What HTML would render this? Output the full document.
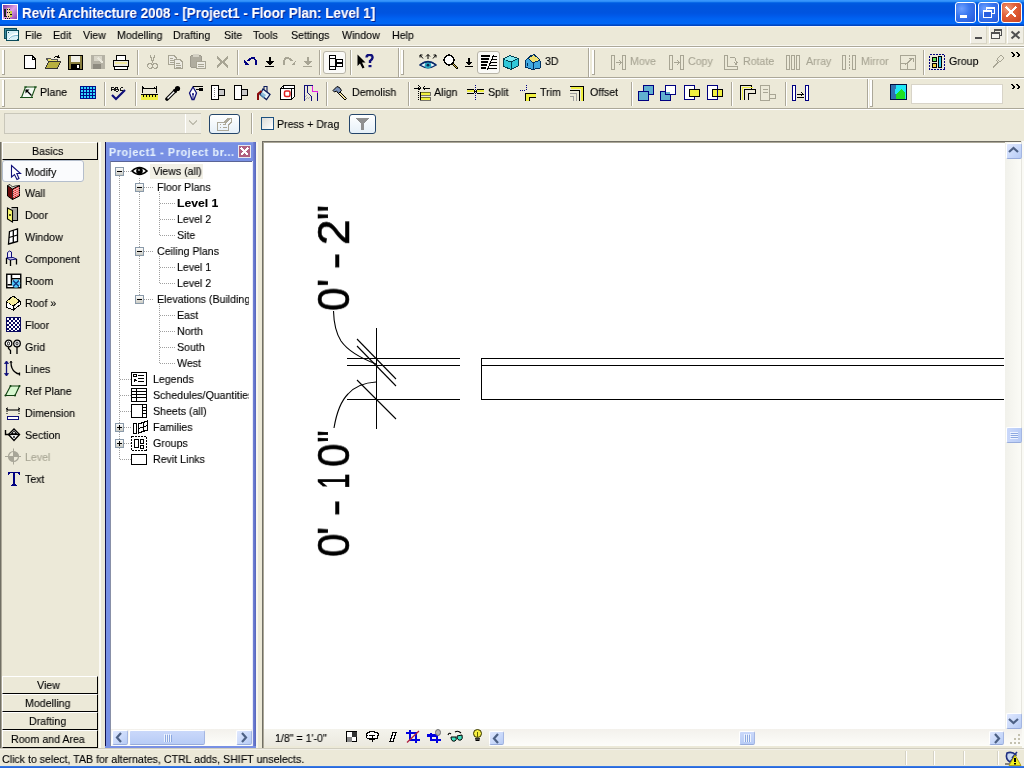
<!DOCTYPE html><html><head><meta charset="utf-8"><style>
html,body{margin:0;padding:0;}
body{width:1024px;height:768px;overflow:hidden;position:relative;background:#ECE9D8;font-family:"Liberation Sans",sans-serif;font-size:11px;}
.t{position:absolute;white-space:nowrap;line-height:1;will-change:transform;transform-origin:0 0;transform:scaleX(0.965);-webkit-text-stroke:0.12px currentColor;}
svg{display:block;}
</style></head><body>
<div style="position:absolute;left:0px;top:0px;width:1024px;height:26px;background:linear-gradient(to bottom,#3D9BFF 0px,#2C8CF6 1.5px,#0A6AE8 2.5px,#005AE0 3.5px,#0055DD 6px,#0054E0 13px,#005AEA 16px,#0063F2 19px,#0067F5 24px,#0050D0 24.6px,#0040B8 26px)"></div>
<div style="position:absolute;left:0px;top:26px;width:1024px;height:1px;background:#F4F4F8"></div>
<svg style="position:absolute;left:2px;top:4px;" width="17" height="16" viewBox="0 0 17 16" shape-rendering="crispEdges"><defs><linearGradient id="ap" x1="0" y1="0" x2="1" y2="1"><stop offset="0" stop-color="#7A3A9A"/><stop offset="0.5" stop-color="#E0A0E8"/><stop offset="1" stop-color="#8A40B0"/></linearGradient></defs><rect x="0" y="0" width="16" height="16" fill="#fff"/><rect x="1" y="1" width="14" height="14" fill="url(#ap)"/><rect x="2" y="5" width="2" height="8" fill="#202020"/><rect x="5" y="4" width="3" height="10" fill="#F0D0A0"/><g fill="#101010"><rect x="5" y="5" width="1" height="1"/><rect x="7" y="5" width="1" height="1"/><rect x="5" y="8" width="1" height="1"/><rect x="7" y="8" width="1" height="1"/><rect x="4" y="12" width="1" height="1"/><rect x="6" y="12" width="1" height="1"/><rect x="8" y="12" width="1" height="1"/><rect x="3" y="14" width="1" height="1"/><rect x="5" y="14" width="1" height="1"/><rect x="7" y="14" width="1" height="1"/></g><rect x="8" y="7" width="2" height="6" fill="#C8D040"/><rect x="8" y="10" width="2" height="1" fill="#101010"/></svg>
<div class="t" style="left:21.5px;top:6.33px;font-size:14.5px;font-weight:bold;color:#fff;text-shadow:1px 1px 0 #0A1E8A;transform-origin:0 0;transform:scaleX(0.924);">Revit Architecture 2008 - [Project1 - Floor Plan: Level 1]</div>
<div style="position:absolute;left:955px;top:2px;width:21px;height:21px;box-sizing:border-box;border:1px solid #fff;border-radius:3px;background:radial-gradient(circle at 30% 30%,#6FA0FF 0%,#3A78F0 40%,#2456D8 100%)"></div>
<div style="position:absolute;left:978px;top:2px;width:21px;height:21px;box-sizing:border-box;border:1px solid #fff;border-radius:3px;background:radial-gradient(circle at 30% 30%,#6FA0FF 0%,#3A78F0 40%,#2456D8 100%)"></div>
<div style="position:absolute;left:1001px;top:2px;width:21px;height:21px;box-sizing:border-box;border:1px solid #fff;border-radius:3px;background:radial-gradient(circle at 30% 30%,#F0A080 0%,#E26038 40%,#C84020 100%)"></div>
<div style="position:absolute;left:960px;top:15px;width:7px;height:3px;background:#fff"></div>
<svg style="position:absolute;left:978px;top:2px;" width="21" height="21" viewBox="0 0 21 21" shape-rendering="crispEdges"><rect x="8" y="5" width="8" height="6" fill="none" stroke="#fff" stroke-width="1"/><rect x="8" y="5" width="8" height="2" fill="#fff"/><rect x="5" y="8.5" width="8" height="7" fill="#2a60e0" stroke="#fff" stroke-width="1"/><rect x="5" y="8" width="8" height="2" fill="#fff"/></svg>
<svg style="position:absolute;left:1001px;top:2px;" width="21" height="21" viewBox="0 0 21 21" shape-rendering="crispEdges"><path d="M5 5 L15 15 M15 5 L5 15" stroke="#fff" stroke-width="2.2"/></svg>
<svg style="position:absolute;left:4px;top:28px;" width="17" height="14" viewBox="0 0 17 14" shape-rendering="crispEdges"><rect x="0.5" y="0.5" width="12" height="10" fill="#3A8AA0" stroke="#0A4A5A"/><rect x="2.5" y="2.5" width="12" height="10" fill="#D8F0F8" stroke="#0A4A5A"/><path d="M5 11 Q8 6 14 6" stroke="#fff" stroke-width="2" fill="none" shape-rendering="geometricPrecision"/><path d="M5 11 Q8 7 14 7.5" stroke="#60A8C8" stroke-width="0.8" fill="none" shape-rendering="geometricPrecision"/><rect x="4" y="3.5" width="1" height="1" fill="#0A4A5A"/><path d="M12.5 12.5 L15 10" stroke="#0A4A5A"/></svg>
<div class="t" style="left:25px;top:29.69px;font-size:11px;font-weight:normal;color:#000;">File</div>
<div class="t" style="left:53px;top:29.69px;font-size:11px;font-weight:normal;color:#000;">Edit</div>
<div class="t" style="left:83px;top:29.69px;font-size:11px;font-weight:normal;color:#000;">View</div>
<div class="t" style="left:117px;top:29.69px;font-size:11px;font-weight:normal;color:#000;">Modelling</div>
<div class="t" style="left:173px;top:29.69px;font-size:11px;font-weight:normal;color:#000;">Drafting</div>
<div class="t" style="left:224px;top:29.69px;font-size:11px;font-weight:normal;color:#000;">Site</div>
<div class="t" style="left:253px;top:29.69px;font-size:11px;font-weight:normal;color:#000;">Tools</div>
<div class="t" style="left:291px;top:29.69px;font-size:11px;font-weight:normal;color:#000;">Settings</div>
<div class="t" style="left:342px;top:29.69px;font-size:11px;font-weight:normal;color:#000;">Window</div>
<div class="t" style="left:392px;top:29.69px;font-size:11px;font-weight:normal;color:#000;">Help</div>
<div style="position:absolute;left:970px;top:26px;width:17px;height:18px;box-sizing:border-box;border-top:1px solid #fff;border-left:1px solid #fff;border-right:1px solid #D8D5C6;border-bottom:1px solid #D8D5C6;background:#EFEDE3"></div>
<div style="position:absolute;left:989px;top:26px;width:17px;height:18px;box-sizing:border-box;border-top:1px solid #fff;border-left:1px solid #fff;border-right:1px solid #D8D5C6;border-bottom:1px solid #D8D5C6;background:#EFEDE3"></div>
<div style="position:absolute;left:1007px;top:26px;width:17px;height:18px;box-sizing:border-box;border-top:1px solid #fff;border-left:1px solid #fff;border-right:1px solid #D8D5C6;border-bottom:1px solid #D8D5C6;background:#EFEDE3"></div>
<div style="position:absolute;left:975px;top:37px;width:7px;height:2px;background:#505050"></div>
<svg style="position:absolute;left:991px;top:29px;" width="12" height="11" viewBox="0 0 12 11" shape-rendering="crispEdges"><path d="M3.5 3 V0.5 H10.5 V6.5 H8" fill="none" stroke="#505050"/><rect x="3" y="0" width="8" height="2" fill="#505050"/><rect x="0.5" y="3.5" width="8" height="6" fill="#F4F3EE" stroke="#505050"/><rect x="0" y="3" width="9" height="2" fill="#505050"/></svg>
<svg style="position:absolute;left:1010px;top:30px;" width="11" height="10" viewBox="0 0 11 10" shape-rendering="crispEdges"><path d="M1.5 1.5 L9.5 8.5 M9.5 1.5 L1.5 8.5" stroke="#505050" stroke-width="2" shape-rendering="geometricPrecision"/></svg>
<div style="position:absolute;left:0px;top:45px;width:1024px;height:1px;background:#F6F5EE"></div>
<div style="position:absolute;left:0px;top:46px;width:1024px;height:1px;background:#ACA899"></div>
<div style="position:absolute;left:0px;top:47px;width:1024px;height:1px;background:#fff"></div>
<div style="position:absolute;left:0px;top:77px;width:1024px;height:1px;background:#ACA899"></div>
<div style="position:absolute;left:0px;top:78px;width:1024px;height:1px;background:#fff"></div>
<div style="position:absolute;left:0px;top:108px;width:1024px;height:1px;background:#ACA899"></div>
<div style="position:absolute;left:0px;top:109px;width:1024px;height:1px;background:#fff"></div>
<div style="position:absolute;left:2px;top:50px;width:2px;height:25px;background:#fff"></div>
<div style="position:absolute;left:4px;top:50px;width:1px;height:25px;background:#ACA899"></div>
<div style="position:absolute;left:2px;top:74px;width:3px;height:1px;background:#ACA899"></div>
<div style="position:absolute;left:2px;top:80px;width:2px;height:27px;background:#fff"></div>
<div style="position:absolute;left:4px;top:80px;width:1px;height:27px;background:#ACA899"></div>
<div style="position:absolute;left:2px;top:106px;width:3px;height:1px;background:#ACA899"></div>
<svg style="position:absolute;left:24px;top:55px;" width="12" height="14" viewBox="0 0 12 14" shape-rendering="crispEdges"><path d="M0.5 0.5 H8 L11.5 4 V13.5 H0.5 Z" fill="#fff" stroke="#000"/><path d="M8 0.5 V4 H11.5" fill="none" stroke="#000"/></svg>
<svg style="position:absolute;left:45px;top:55px;" width="16" height="14" viewBox="0 0 16 14" shape-rendering="crispEdges"><path d="M1 3 H5 L6 4 H12 V6 H3 Z" fill="#e8e070" stroke="#555" stroke-width="1"/><path d="M0.5 13.5 L3.5 6.5 H15.5 L12.5 13.5 Z" fill="#b8b040" stroke="#333"/><path d="M9 3 Q11 0 14 2" stroke="#000" fill="none"/><path d="M13 0 L14.5 2.5 L12 3" stroke="#000" fill="none"/></svg>
<svg style="position:absolute;left:68px;top:55px;" width="15" height="15" viewBox="0 0 15 15" shape-rendering="crispEdges"><rect x="0.5" y="0.5" width="14" height="14" fill="#8a8040" stroke="#000"/><rect x="3" y="1" width="9" height="6" fill="#f0f0e8"/><rect x="3" y="9" width="9" height="5" fill="#000"/><rect x="9" y="10" width="2" height="3" fill="#fff"/></svg>
<svg style="position:absolute;left:90px;top:54px;" width="16" height="16" viewBox="0 0 16 16" shape-rendering="crispEdges"><rect x="1" y="1" width="14" height="14" fill="#B5B2A5"/><rect x="4" y="2" width="8" height="5" fill="#D8D5C8"/><rect x="3" y="10" width="8" height="5" fill="#8E8B80"/><path d="M8 4 L13 9" stroke="#E8E6DA" stroke-width="2"/></svg>
<svg style="position:absolute;left:113px;top:55px;" width="16" height="15" viewBox="0 0 16 15" shape-rendering="crispEdges"><rect x="3.5" y="0.5" width="9" height="5" fill="#fff" stroke="#000"/><rect x="0.5" y="5.5" width="15" height="6" fill="#e8e8e0" stroke="#000"/><rect x="2" y="7" width="12" height="2" fill="#f0e8a0"/><rect x="1.5" y="11.5" width="13" height="3" fill="#fff" stroke="#000"/></svg>
<div style="position:absolute;left:137px;top:50px;width:1px;height:25px;background:#ACA899"></div>
<div style="position:absolute;left:138px;top:50px;width:1px;height:25px;background:#fff"></div>
<svg style="position:absolute;left:147px;top:55px;" width="11" height="14" viewBox="0 0 11 14" shape-rendering="crispEdges"><path d="M3 0 L6 8 M8 0 L5 8" stroke="#A8A594" stroke-width="1.2" fill="none"/><circle cx="3" cy="11" r="2.3" fill="none" stroke="#A8A594" stroke-width="1.2"/><circle cx="8" cy="11" r="2.3" fill="none" stroke="#A8A594" stroke-width="1.2"/></svg>
<svg style="position:absolute;left:168px;top:55px;" width="16" height="14" viewBox="0 0 16 14" shape-rendering="crispEdges"><path d="M0.5 0.5 H6 L8 2.5 V9.5 H0.5Z" fill="#EDEBE2" stroke="#A8A594"/><path d="M6.5 4.5 H12 L14.5 7 V13.5 H6.5Z" fill="#EDEBE2" stroke="#A8A594"/><path d="M8 8 H12 M8 10 H13 M8 12 H13 M2 3 H5 M2 5 H6 M2 7 H6" stroke="#A8A594"/></svg>
<svg style="position:absolute;left:190px;top:54px;" width="16" height="15" viewBox="0 0 16 15" shape-rendering="crispEdges"><rect x="0.5" y="1.5" width="11" height="12" rx="2" fill="#B0AD9F" stroke="#9E9B8E"/><rect x="3" y="0" width="6" height="3" fill="#D5D2C5"/><rect x="6.5" y="7.5" width="9" height="7" fill="#EDEBE2" stroke="#A8A594"/><path d="M8 10 H14 M8 12 H14" stroke="#A8A594"/></svg>
<svg style="position:absolute;left:216px;top:56px;" width="13" height="12" viewBox="0 0 13 12" shape-rendering="crispEdges"><path d="M1 1 L12 11 M12 1 L1 11" stroke="#A8A594" stroke-width="2"/></svg>
<div style="position:absolute;left:237px;top:50px;width:1px;height:25px;background:#ACA899"></div>
<div style="position:absolute;left:238px;top:50px;width:1px;height:25px;background:#fff"></div>
<svg style="position:absolute;left:244px;top:57px;" width="14" height="9" viewBox="0 0 14 9" shape-rendering="crispEdges"><path d="M4 4 Q7 0 10 1 Q13 3 12 8" stroke="#000080" stroke-width="1.6" fill="none"/><path d="M0 3 L5 8 L1 8 Z" fill="#000080"/></svg>
<svg style="position:absolute;left:265px;top:57px;" width="9" height="10" viewBox="0 0 9 10" shape-rendering="crispEdges"><path d="M4.5 0 V6" stroke="#000" stroke-width="2"/><path d="M0 4 H9 L4.5 8.5 Z" fill="#000"/><rect x="0" y="9" width="9" height="1" fill="#000"/></svg>
<svg style="position:absolute;left:282px;top:57px;" width="14" height="9" viewBox="0 0 14 9" shape-rendering="crispEdges"><path d="M10 4 Q7 0 4 1 Q1 3 2 8" stroke="#A8A594" stroke-width="1.6" fill="none"/><path d="M14 3 L9 8 L13 8 Z" fill="#A8A594"/></svg>
<svg style="position:absolute;left:303px;top:57px;" width="9" height="10" viewBox="0 0 9 10" shape-rendering="crispEdges"><path d="M4.5 0 V6" stroke="#A8A594" stroke-width="2"/><path d="M0 4 H9 L4.5 8.5 Z" fill="#A8A594"/><rect x="0" y="9" width="9" height="1" fill="#A8A594"/></svg>
<div style="position:absolute;left:319px;top:50px;width:1px;height:25px;background:#ACA899"></div>
<div style="position:absolute;left:320px;top:50px;width:1px;height:25px;background:#fff"></div>
<div style="position:absolute;left:323px;top:51px;width:23px;height:23px;box-sizing:border-box;border:1px solid #B8B5A8;border-radius:3px;background:#FAFAF7"></div>
<svg style="position:absolute;left:328px;top:55px;" width="16" height="15" viewBox="0 0 16 15" shape-rendering="crispEdges"><path d="M1.5 1 V14 M5 3.5 H7.5 V10 H8" stroke="#000" fill="none"/><rect x="1.5" y="0.5" width="6" height="3" rx="1" fill="#fff" stroke="#000"/><rect x="8.5" y="4.5" width="6" height="3" rx="1" fill="#fff" stroke="#000"/><rect x="8.5" y="8.5" width="6" height="3" rx="1" fill="#fff" stroke="#000"/><rect x="1.5" y="11.5" width="6" height="3" rx="1" fill="#fff" stroke="#000"/><path d="M7.5 6 H8.5" stroke="#000"/></svg>
<div style="position:absolute;left:350px;top:50px;width:1px;height:25px;background:#ACA899"></div>
<div style="position:absolute;left:351px;top:50px;width:1px;height:25px;background:#fff"></div>
<svg style="position:absolute;left:357px;top:54px;" width="17" height="15" viewBox="0 0 17 15" shape-rendering="crispEdges"><g shape-rendering="geometricPrecision"><path d="M0.5 0.5 V12 L3 9.5 L5.5 14.5 L7.5 13.5 L5 8.5 H8.5 Z" fill="#000"/><path d="M9.5 3.5 Q9.5 0.8 12.5 0.8 Q15.8 0.8 15.5 3.8 Q15.2 5.8 13 7 V9" stroke="#10107A" stroke-width="2.4" fill="none"/><rect x="11.5" y="11" width="3" height="2.2" fill="#10107A"/></g></svg>
<div style="position:absolute;left:398px;top:48px;width:1px;height:29px;background:#ACA899"></div>
<div style="position:absolute;left:399px;top:48px;width:1px;height:29px;background:#fff"></div>
<div style="position:absolute;left:401px;top:50px;width:2px;height:25px;background:#fff"></div>
<div style="position:absolute;left:403px;top:50px;width:1px;height:25px;background:#ACA899"></div>
<div style="position:absolute;left:401px;top:74px;width:3px;height:1px;background:#ACA899"></div>
<svg style="position:absolute;left:419px;top:54px;" width="18" height="16" viewBox="0 0 18 16" shape-rendering="crispEdges"><g shape-rendering="geometricPrecision"><path d="M9 0.5 V5 M7 2.5 L9 0.5 L11 2.5 M1 1 L4 4.5 M1 1 V3.5 M1 1 H3.5 M17 1 L14 4.5 M17 1 V3.5 M17 1 H14.5" stroke="#000" stroke-width="1" fill="none"/><path d="M0.8 11 Q9 4 17.2 11 Q9 16.5 0.8 11 Z" fill="#E8F8FC" stroke="#0A2A6A" stroke-width="1.3"/><circle cx="9" cy="11.2" r="3.2" fill="#2AA8C0"/><circle cx="9" cy="11.2" r="1.4" fill="#0A2A5A"/><path d="M1.5 10.5 Q9 5 16.5 10.5" stroke="#0A2A6A" stroke-width="1.5" fill="none"/></g></svg>
<svg style="position:absolute;left:443px;top:54px;" width="16" height="16" viewBox="0 0 16 16" shape-rendering="crispEdges"><circle cx="6" cy="6" r="5" fill="#fff" stroke="#000" stroke-width="1.3"/><path d="M9.5 9.5 L15 15" stroke="#000" stroke-width="2.5"/><path d="M10.5 10.5 L14.5 14.5" stroke="#d8c040" stroke-width="1.3"/></svg>
<svg style="position:absolute;left:465px;top:58px;" width="8" height="9" viewBox="0 0 8 9" shape-rendering="crispEdges"><path d="M4 0 V5" stroke="#000" stroke-width="2"/><path d="M0 3.5 H8 L4 7.5 Z" fill="#000"/><rect x="0" y="8" width="8" height="1" fill="#000"/></svg>
<div style="position:absolute;left:477px;top:51px;width:23px;height:23px;box-sizing:border-box;border:1px solid #B8B5A8;border-radius:3px;background:#FAFAF7"></div>
<svg style="position:absolute;left:481px;top:55px;" width="16" height="15" viewBox="0 0 16 15" shape-rendering="crispEdges"><path d="M0 1 H9 M0 4 H8 M0 7 H7 M0 10 H6 M0 13 H5" stroke="#000" stroke-width="2"/><path d="M11 1 H16 M10 4 H16 M9 7 H16 M8 10 H16 M7 13 H16" stroke="#000" stroke-width="1"/><path d="M13 0 L6 15" stroke="#000" stroke-width="1"/></svg>
<svg style="position:absolute;left:502px;top:55px;" width="17" height="15" viewBox="0 0 17 15" shape-rendering="crispEdges"><path d="M1 4 L8 0.5 L16 3.5 V11 L9 14.5 L1 11 Z" fill="#30C8D8" stroke="#004050"/><path d="M1 4 L9 7 L16 3.5 M9 7 V14.5" stroke="#004050" fill="none"/><path d="M1.5 4.2 L8 1 L15 3.6 L9 6.5 Z" fill="#80E8F0"/></svg>
<svg style="position:absolute;left:524px;top:54px;" width="17" height="16" viewBox="0 0 17 16" shape-rendering="crispEdges"><path d="M1 7 L7 1 L13 3 L16 7 V14 L9 15.5 L1 13 Z" fill="#40A8E0" stroke="#003060"/><path d="M4 4 L10 0.5 L16 6 L9 9 Z" fill="#F0E070" stroke="#003060"/><path d="M9 9 V15.5 M3 12 V9" stroke="#003060"/></svg>
<div class="t" style="left:545px;top:55.69px;font-size:11px;font-weight:normal;color:#000;">3D</div>
<div style="position:absolute;left:588px;top:48px;width:1px;height:29px;background:#ACA899"></div>
<div style="position:absolute;left:589px;top:48px;width:1px;height:29px;background:#fff"></div>
<div style="position:absolute;left:592px;top:50px;width:2px;height:25px;background:#fff"></div>
<div style="position:absolute;left:594px;top:50px;width:1px;height:25px;background:#ACA899"></div>
<div style="position:absolute;left:592px;top:74px;width:3px;height:1px;background:#ACA899"></div>
<svg style="position:absolute;left:611px;top:55px;" width="15" height="15" viewBox="0 0 15 15" shape-rendering="crispEdges"><rect x="0.5" y="0.5" width="3" height="14" fill="none" stroke="#A8A594"/><rect x="11.5" y="0.5" width="3" height="14" fill="none" stroke="#A8A594"/><path d="M5 7.5 H10 M8 5 L10 7.5 L8 10" stroke="#A8A594" fill="none"/></svg>
<div class="t" style="left:630px;top:55.69px;font-size:11px;font-weight:normal;color:#A8A594;">Move</div>
<svg style="position:absolute;left:669px;top:55px;" width="15" height="15" viewBox="0 0 15 15" shape-rendering="crispEdges"><rect x="0.5" y="0.5" width="3" height="14" fill="none" stroke="#A8A594"/><rect x="11.5" y="0.5" width="3" height="14" fill="none" stroke="#A8A594"/><path d="M5 7.5 H10 M8 5 L10 7.5 L8 10" stroke="#A8A594" fill="none"/></svg>
<div class="t" style="left:688px;top:55.69px;font-size:11px;font-weight:normal;color:#A8A594;">Copy</div>
<svg style="position:absolute;left:724px;top:55px;" width="15" height="15" viewBox="0 0 15 15" shape-rendering="crispEdges"><path d="M0.5 0.5 V14.5 H13.5 V11.5 H3.5 V0.5 Z" fill="none" stroke="#A8A594"/><path d="M6 2 H9 Q12 2 12 6 V9 M10 7 L12 9.5 L14 7" stroke="#A8A594" fill="none"/></svg>
<div class="t" style="left:743px;top:55.69px;font-size:11px;font-weight:normal;color:#A8A594;">Rotate</div>
<svg style="position:absolute;left:786px;top:55px;" width="15" height="15" viewBox="0 0 15 15" shape-rendering="crispEdges"><rect x="0.5" y="0.5" width="3" height="14" fill="none" stroke="#A8A594"/><rect x="5.5" y="0.5" width="3" height="14" fill="none" stroke="#A8A594"/><rect x="10.5" y="0.5" width="3" height="14" fill="none" stroke="#A8A594"/></svg>
<div class="t" style="left:806px;top:55.69px;font-size:11px;font-weight:normal;color:#A8A594;">Array</div>
<svg style="position:absolute;left:842px;top:55px;" width="15" height="15" viewBox="0 0 15 15" shape-rendering="crispEdges"><rect x="0.5" y="0.5" width="3" height="14" fill="none" stroke="#A8A594"/><rect x="10.5" y="0.5" width="3" height="14" fill="none" stroke="#A8A594"/><path d="M7 0 V15" stroke="#A8A594" stroke-dasharray="2 1"/></svg>
<div class="t" style="left:861px;top:55.69px;font-size:11px;font-weight:normal;color:#A8A594;">Mirror</div>
<svg style="position:absolute;left:900px;top:55px;" width="16" height="15" viewBox="0 0 16 15" shape-rendering="crispEdges"><rect x="0.5" y="0.5" width="15" height="14" fill="none" stroke="#A8A594"/><path d="M0.5 8.5 H7.5 V14.5 M5 10 L13 3 M9 3 H13 V7" stroke="#A8A594" fill="none"/></svg>
<div style="position:absolute;left:923px;top:50px;width:1px;height:25px;background:#ACA899"></div>
<div style="position:absolute;left:924px;top:50px;width:1px;height:25px;background:#fff"></div>
<svg style="position:absolute;left:929px;top:54px;" width="16" height="16" viewBox="0 0 16 16" shape-rendering="crispEdges"><rect x="0.5" y="0.5" width="15" height="15" fill="none" stroke="#000080" stroke-dasharray="2 1"/><rect x="3" y="3" width="4" height="4" fill="#60E060" stroke="#000"/><rect x="3" y="9" width="4" height="4" fill="#F0D040" stroke="#000"/><rect x="9.5" y="2.5" width="3" height="11" fill="#40D0F0" stroke="#000"/></svg>
<div class="t" style="left:949px;top:55.69px;font-size:11px;font-weight:normal;color:#000;">Group</div>
<svg style="position:absolute;left:992px;top:54px;" width="13" height="15" viewBox="0 0 13 15" shape-rendering="crispEdges"><path d="M1 14 L6 8 M5 5 L9 1 L12 4 L8 8 Z M4 6 L7 9" stroke="#A8A594" stroke-width="1.3" fill="none"/></svg>
<svg style="position:absolute;left:1011px;top:52px;" width="10" height="7" viewBox="0 0 10 7" shape-rendering="crispEdges"><path d="M0.5 0.5 L3 3 L0.5 5.5 M1.5 0.5 L4 3 L1.5 5.5 M5.5 0.5 L8 3 L5.5 5.5 M6.5 0.5 L9 3 L6.5 5.5" stroke="#000" fill="none"/></svg>
<svg style="position:absolute;left:1011px;top:84px;" width="10" height="7" viewBox="0 0 10 7" shape-rendering="crispEdges"><path d="M0.5 0.5 L3 3 L0.5 5.5 M1.5 0.5 L4 3 L1.5 5.5 M5.5 0.5 L8 3 L5.5 5.5 M6.5 0.5 L9 3 L6.5 5.5" stroke="#000" fill="none"/></svg>
<svg style="position:absolute;left:20px;top:85px;" width="17" height="15" viewBox="0 0 17 15" shape-rendering="crispEdges"><g shape-rendering="geometricPrecision"><path d="M5.5 2 H15.5 L11.5 12.5 H1.5 Z" fill="#F4FAF4" stroke="#185018" stroke-width="1.1"/><path d="M4 2 H7 M14 2 H17 M0 12.5 H3 M10 12.5 H13" stroke="#185018" stroke-width="1"/><path d="M6 5 L11.5 10.5" stroke="#000" stroke-width="1.3"/><path d="M5.5 4.5 V8.5 L9.5 4.5 Z" fill="#000"/></g></svg>
<div class="t" style="left:40px;top:86.69px;font-size:11px;font-weight:normal;color:#000;">Plane</div>
<svg style="position:absolute;left:80px;top:86px;" width="16" height="13" viewBox="0 0 16 13" shape-rendering="crispEdges"><rect x="0" y="0" width="16" height="13" fill="#00108A"/><g fill="#30D8FF"><rect x="1" y="1" width="2" height="2"/><rect x="4" y="1" width="2" height="2"/><rect x="7" y="1" width="2" height="2"/><rect x="10" y="1" width="2" height="2"/><rect x="13" y="1" width="2" height="2"/><rect x="1" y="4" width="2" height="2"/><rect x="4" y="4" width="2" height="2"/><rect x="7" y="4" width="2" height="2"/><rect x="10" y="4" width="2" height="2"/><rect x="13" y="4" width="2" height="2"/><rect x="1" y="7" width="2" height="2"/><rect x="4" y="7" width="2" height="2"/><rect x="7" y="7" width="2" height="2"/><rect x="10" y="7" width="2" height="2"/><rect x="13" y="7" width="2" height="2"/><rect x="1" y="10" width="2" height="2"/><rect x="4" y="10" width="2" height="2"/><rect x="7" y="10" width="2" height="2"/><rect x="10" y="10" width="2" height="2"/><rect x="13" y="10" width="2" height="2"/></g></svg>
<div style="position:absolute;left:104px;top:82px;width:1px;height:24px;background:#ACA899"></div>
<div style="position:absolute;left:105px;top:82px;width:1px;height:24px;background:#fff"></div>
<svg style="position:absolute;left:110px;top:86px;" width="16" height="15" viewBox="0 0 16 15" shape-rendering="crispEdges"><g fill="#000"><path d="M1 5 V2 L2 1 H3 L4 2 V5 M1 3.5 H4" stroke="#000" fill="none" stroke-width="0.9"/><path d="M5.5 1 V5 H7.5 L8.5 4 L7.5 3 H5.5 M5.5 1 H7.5 L8.2 2 L7.5 3" stroke="#000" fill="none" stroke-width="0.9"/><path d="M12.5 1.5 Q11.5 1 10.5 1.5 Q9.8 3 10.5 4.5 Q11.5 5 12.5 4.5" stroke="#000" fill="none" stroke-width="0.9"/></g><path d="M2 9 L6 13 L15 4" stroke="#10107A" stroke-width="2.2" fill="none" shape-rendering="geometricPrecision"/></svg>
<div style="position:absolute;left:135px;top:82px;width:1px;height:24px;background:#ACA899"></div>
<div style="position:absolute;left:136px;top:82px;width:1px;height:24px;background:#fff"></div>
<svg style="position:absolute;left:141px;top:85px;" width="17" height="15" viewBox="0 0 17 15" shape-rendering="crispEdges"><path d="M1 1 V8 M15 1 V8 M1 3 H15 M2 2 L4 4 M14 2 L12 4" stroke="#000" fill="none"/><rect x="0" y="9" width="17" height="6" fill="#F0F040"/><path d="M0 9.5 H17 M2 10 V12 M5 10 V12 M8 10 V12 M11 10 V12 M14 10 V12" stroke="#000" /></svg>
<svg style="position:absolute;left:165px;top:85px;" width="16" height="16" viewBox="0 0 16 16" shape-rendering="crispEdges"><g shape-rendering="geometricPrecision"><path d="M10 6 L2 14" stroke="#000" stroke-width="3.6" stroke-linecap="round"/><path d="M9.5 6.5 L2.5 13.5" stroke="#fff" stroke-width="1.5"/><circle cx="12.5" cy="3.5" r="2.6" fill="#000"/><path d="M8.5 4.5 L11.5 7.5" stroke="#000" stroke-width="2.2"/></g></svg>
<svg style="position:absolute;left:188px;top:85px;" width="16" height="16" viewBox="0 0 16 16" shape-rendering="crispEdges"><g shape-rendering="geometricPrecision"><path d="M5 2 L8.5 8 L6 14.5 H4 L1.5 8 Z" fill="#fff" stroke="#10107A" stroke-width="1.3"/><path d="M5 9 V14" stroke="#10107A" stroke-width="1"/><circle cx="5" cy="9" r="1" fill="#10107A"/></g><path d="M5 1.5 H15 M8 4.5 H11" stroke="#000"/><rect x="11" y="3" width="4" height="3" fill="#000"/></svg>
<svg style="position:absolute;left:211px;top:85px;" width="14" height="15" viewBox="0 0 14 15" shape-rendering="crispEdges"><rect x="0.5" y="0.5" width="7" height="14" fill="#fff" stroke="#000"/><rect x="7.5" y="4.5" width="6" height="6" fill="#C8C8C8" stroke="#000"/><path d="M3 3 V12" stroke="#888" stroke-dasharray="1 1"/></svg>
<svg style="position:absolute;left:234px;top:85px;" width="14" height="15" viewBox="0 0 14 15" shape-rendering="crispEdges"><rect x="0.5" y="0.5" width="7" height="14" fill="#fff" stroke="#000"/><rect x="7.5" y="4.5" width="6" height="6" fill="#C8C8C8" stroke="#000"/></svg>
<svg style="position:absolute;left:257px;top:85px;" width="16" height="16" viewBox="0 0 16 16" shape-rendering="crispEdges"><g shape-rendering="geometricPrecision"><path d="M6 4 L13 9.5 L9.5 14.5 L3 9.5 Z" fill="#E8F4FA" stroke="#0A1A5A" stroke-width="1.3"/><path d="M5 7 L9 10 L6.5 13.5 L3 10.5 Z" fill="#6AA8D0" opacity="0.7"/><path d="M7 4.5 V1.5 H10 V7" stroke="#0A1A5A" stroke-width="1.1" fill="none"/><path d="M4.5 6 L1 9 V15" stroke="#8A0A0A" stroke-width="2" fill="none"/></g></svg>
<svg style="position:absolute;left:280px;top:85px;" width="16" height="16" viewBox="0 0 16 16" shape-rendering="crispEdges"><path d="M0.5 3.5 L3.5 0.5 H14.5 V11.5 L11.5 14.5 H0.5 Z" fill="#fff" stroke="#000"/><path d="M3.5 0.5 V3.5 H14.5 M0.5 3.5 H3.5 M11.5 3.5 V14.5" fill="none" stroke="#000"/><g shape-rendering="geometricPrecision"><rect x="4.5" y="6" width="5.5" height="5.5" rx="1.5" fill="none" stroke="#E02020" stroke-width="1.5"/></g></svg>
<svg style="position:absolute;left:304px;top:85px;" width="15" height="16" viewBox="0 0 15 16" shape-rendering="crispEdges"><path d="M0.5 15.5 V0.5 H8.5 M13.5 7.5 V15.5" stroke="#10107A" fill="none"/><path d="M8.5 0.5 V6.5 H13.5 V7.5" stroke="#E020E0" stroke-width="1" fill="none"/><path d="M3.5 0.5 V7.5 L7.5 11.5 V15.5" stroke="#10107A" fill="none"/><g shape-rendering="geometricPrecision"><path d="M4 14 L6.5 11.5 M1 12 L3 10 M1 15 L4 12" stroke="#A8A8A8" stroke-width="0.8"/></g></svg>
<div style="position:absolute;left:326px;top:82px;width:1px;height:24px;background:#ACA899"></div>
<div style="position:absolute;left:327px;top:82px;width:1px;height:24px;background:#fff"></div>
<svg style="position:absolute;left:332px;top:85px;" width="16" height="16" viewBox="0 0 16 16" shape-rendering="crispEdges"><g shape-rendering="geometricPrecision"><path d="M7 6 L14.5 13.5 L13 15 L5.5 7.5 Z" fill="#F0E0A0" stroke="#000" stroke-width="1"/><path d="M1 5.5 L5 1.5 L7.5 2.5 L9.5 5.5 L6.5 8.5 L4.5 6 L2.5 7 Z" fill="#7A90B8" stroke="#000" stroke-width="1"/></g></svg>
<div class="t" style="left:352px;top:86.69px;font-size:11px;font-weight:normal;color:#000;">Demolish</div>
<div style="position:absolute;left:408px;top:82px;width:1px;height:24px;background:#ACA899"></div>
<div style="position:absolute;left:409px;top:82px;width:1px;height:24px;background:#fff"></div>
<svg style="position:absolute;left:414px;top:85px;" width="17" height="16" viewBox="0 0 17 16" shape-rendering="crispEdges"><path d="M4 0 V16" stroke="#000" stroke-dasharray="1 1"/><path d="M0 3 H7 M5 1 L7 3 L5 5 M16 3 H9 M11 1 L9 3 L11 5" stroke="#000" fill="none"/><rect x="6" y="7" width="10" height="3" fill="#F0F040" stroke="#000" stroke-width="0.5"/><rect x="6" y="12" width="10" height="3" fill="#F0F040" stroke="#000" stroke-width="0.5"/><path d="M6 7 V15" stroke="#000"/></svg>
<div class="t" style="left:434px;top:86.69px;font-size:11px;font-weight:normal;color:#000;">Align</div>
<svg style="position:absolute;left:467px;top:85px;" width="17" height="16" viewBox="0 0 17 16" shape-rendering="crispEdges"><path d="M8.5 0 V16" stroke="#000080" stroke-dasharray="1 1"/><rect x="0" y="5" width="7" height="2" fill="#F0F040"/><rect x="10" y="5" width="7" height="2" fill="#F0F040"/><path d="M0 4.5 H6 M0 8.5 H6 M11 4.5 H17 M11 8.5 H17 M6 4 L8 6.5 L6 9 M11 4 L9 6.5 L11 9" stroke="#000" fill="none"/></svg>
<div class="t" style="left:488px;top:86.69px;font-size:11px;font-weight:normal;color:#000;">Split</div>
<svg style="position:absolute;left:520px;top:85px;" width="16" height="16" viewBox="0 0 16 16" shape-rendering="crispEdges"><path d="M0 5.5 H6 M6.5 0 V5" stroke="#000080" stroke-dasharray="1 1"/><path d="M5 8 H16 M5 8 V16" stroke="#000" stroke-width="1"/><rect x="6" y="9" width="10" height="3" fill="#F0F040"/><rect x="6" y="9" width="3" height="7" fill="#F0F040"/><path d="M9 12 H16 M9 12 V16" stroke="#000"/></svg>
<div class="t" style="left:540px;top:86.69px;font-size:11px;font-weight:normal;color:#000;">Trim</div>
<svg style="position:absolute;left:570px;top:85px;" width="16" height="16" viewBox="0 0 16 16" shape-rendering="crispEdges"><path d="M0 1.5 H13.5 V16" stroke="#000" fill="none"/><path d="M1 2 H12 V16" stroke="#F0F040" stroke-width="2" fill="none" transform="translate(0,1)"/><path d="M0 5.5 H9.5 V16" stroke="#000" fill="none"/><path d="M0 8.5 H6.5 V16" stroke="#A0A0A0" fill="none"/><path d="M0 11.5 H3.5 V16" stroke="#A0A0A0" fill="none"/></svg>
<div class="t" style="left:590px;top:86.69px;font-size:11px;font-weight:normal;color:#000;">Offset</div>
<div style="position:absolute;left:631px;top:82px;width:1px;height:24px;background:#ACA899"></div>
<div style="position:absolute;left:632px;top:82px;width:1px;height:24px;background:#fff"></div>
<svg style="position:absolute;left:638px;top:85px;" width="16" height="16" viewBox="0 0 16 16" shape-rendering="crispEdges"><rect x="5.5" y="0.5" width="10" height="9" fill="#60B0D0" stroke="#000080"/><rect x="0.5" y="6.5" width="10" height="9" fill="#60B0D0" stroke="#000080"/></svg>
<svg style="position:absolute;left:660px;top:85px;" width="16" height="16" viewBox="0 0 16 16" shape-rendering="crispEdges"><rect x="0.5" y="6.5" width="10" height="9" fill="#60B0D0" stroke="#000080"/><rect x="5.5" y="0.5" width="10" height="9" fill="#fff" stroke="#000080"/><rect x="6" y="7" width="4" height="2" fill="#60B0D0"/></svg>
<svg style="position:absolute;left:684px;top:85px;" width="16" height="16" viewBox="0 0 16 16" shape-rendering="crispEdges"><rect x="0.5" y="0.5" width="10" height="14" fill="#fff" stroke="#000080"/><rect x="5.5" y="4.5" width="10" height="7" fill="#F0F040" stroke="#000"/></svg>
<svg style="position:absolute;left:707px;top:85px;" width="16" height="16" viewBox="0 0 16 16" shape-rendering="crispEdges"><rect x="0.5" y="0.5" width="10" height="14" fill="#fff" stroke="#000080"/><rect x="5.5" y="4.5" width="10" height="7" fill="#F0F040" stroke="#000"/><path d="M10.5 5 V11" stroke="#000080"/></svg>
<div style="position:absolute;left:731px;top:82px;width:1px;height:24px;background:#ACA899"></div>
<div style="position:absolute;left:732px;top:82px;width:1px;height:24px;background:#fff"></div>
<svg style="position:absolute;left:740px;top:85px;" width="16" height="16" viewBox="0 0 16 16" shape-rendering="crispEdges"><path d="M0.5 15 V0.5 H11.5 V4.5 M4.5 15 V4.5 H15.5 V8.5 H8.5 V15" stroke="#000" fill="none" stroke-width="1"/><path d="M2.5 15 V2.5 H13" stroke="#F0F040" stroke-width="1" fill="none"/></svg>
<svg style="position:absolute;left:760px;top:85px;" width="16" height="16" viewBox="0 0 16 16" shape-rendering="crispEdges"><path d="M0.5 0.5 H9.5 V15.5 H0.5 Z" fill="none" stroke="#A8A594"/><path d="M3 4 H8 M3 7 H8 M9 9 H15 V13 H9" stroke="#A8A594" fill="none"/></svg>
<div style="position:absolute;left:785px;top:82px;width:1px;height:24px;background:#ACA899"></div>
<div style="position:absolute;left:786px;top:82px;width:1px;height:24px;background:#fff"></div>
<svg style="position:absolute;left:792px;top:85px;" width="17" height="16" viewBox="0 0 17 16" shape-rendering="crispEdges"><path d="M0.5 0.5 V15.5 H3.5 V0.5 Z M13.5 0.5 V15.5 H16.5 V0.5 Z" fill="#fff" stroke="#000080"/><path d="M5 9 H12 M5 12 H12 M9 7 L11 9 L9 11" stroke="#000" fill="none"/></svg>
<div style="position:absolute;left:867px;top:79px;width:1px;height:29px;background:#ACA899"></div>
<div style="position:absolute;left:868px;top:79px;width:1px;height:29px;background:#fff"></div>
<div style="position:absolute;left:870px;top:80px;width:2px;height:27px;background:#fff"></div>
<div style="position:absolute;left:872px;top:80px;width:1px;height:27px;background:#ACA899"></div>
<div style="position:absolute;left:870px;top:106px;width:3px;height:1px;background:#ACA899"></div>
<svg style="position:absolute;left:890px;top:84px;" width="17" height="17" viewBox="0 0 17 17" shape-rendering="crispEdges"><rect x="0.5" y="0.5" width="16" height="15" fill="#20E8F8" stroke="#001040"/><rect x="1" y="1" width="4" height="14" fill="#3070B0"/><path d="M5 1 V4 L3 5 V8 L6 9 V15 H16 V10 L12 5 L8 9 L6 8 V5 L7 4 V1 Z" fill="#3070B0" opacity="0"/><path d="M6 15 V10 L7 9 L11 5 L15 9 V15 Z" fill="#20E020"/><path d="M5 1 H6 V5 L4 6 V9 L6 10 V15 H5 Z" fill="#3070B0"/></svg>
<div style="position:absolute;left:911px;top:84px;width:92px;height:20px;box-sizing:border-box;border:1px solid #D8D4C8;background:#fff"></div>
<div style="position:absolute;left:4px;top:113px;width:197px;height:21px;box-sizing:border-box;border:1px solid #C9C7BA;background:#EAE8DD"></div>
<div style="position:absolute;left:185px;top:114px;width:15px;height:19px;background:#EEECE2;border-left:1px solid #fff"></div>
<svg style="position:absolute;left:188px;top:119px;" width="10" height="8" viewBox="0 0 10 8" shape-rendering="crispEdges"><path d="M1 1.5 L5 5.5 L9 1.5" stroke="#C0BEB0" stroke-width="2" fill="none"/></svg>
<div style="position:absolute;left:209px;top:114px;width:31px;height:20px;box-sizing:border-box;border:1px solid #24456A;border-radius:3px;background:linear-gradient(#FFFFFF,#E6F0F8)"></div>
<svg style="position:absolute;left:216px;top:116px;" width="17" height="16" viewBox="0 0 17 16" shape-rendering="crispEdges"><path d="M1.5 6.5 H8 L12 2.5 H15.5 V6 L12 9.5 V14.5 H1.5 Z" fill="none" stroke="#ACA899"/><path d="M4 8.5 H5 M7 8.5 H10 M4 11 H5 M7 11 H11" stroke="#ACA899"/><path d="M9 7 L14 3" stroke="#ACA899" stroke-width="1.5"/></svg>
<div style="position:absolute;left:251px;top:113px;width:1px;height:21px;background:#ACA899"></div>
<div style="position:absolute;left:252px;top:113px;width:1px;height:21px;background:#fff"></div>
<div style="position:absolute;left:261px;top:117px;width:13px;height:13px;box-sizing:border-box;border:1px solid #1C5180;background:linear-gradient(135deg,#DCDCD7,#FFFFFF)"></div>
<div class="t" style="left:277px;top:118.69px;font-size:11px;font-weight:normal;color:#000;">Press + Drag</div>
<div style="position:absolute;left:349px;top:114px;width:27px;height:20px;box-sizing:border-box;border:1px solid #24456A;border-radius:3px;background:linear-gradient(#FFFFFF,#E6F0F8)"></div>
<svg style="position:absolute;left:355px;top:117px;" width="15" height="14" viewBox="0 0 15 14" shape-rendering="crispEdges"><path d="M1 1 H14 L9 7 V13 L6 13 V7 Z" fill="#909090"/></svg>
<div style="position:absolute;left:0px;top:142px;width:1px;height:606px;background:#716F64"></div>
<div style="position:absolute;left:1px;top:142px;width:1px;height:606px;background:#ACA899"></div>
<div style="position:absolute;left:2px;top:142px;width:96px;height:18px;box-sizing:border-box;border-top:1px solid #fff;border-left:1px solid #fff;border-right:1px solid #000;border-bottom:1px solid #000;background:#ECE9D8"></div>
<div class="t" style="left:32px;top:145.69px;font-size:11px;font-weight:normal;color:#000;">Basics</div>
<div style="position:absolute;left:2px;top:160px;width:82px;height:22px;box-sizing:border-box;border:1px solid #B4BECC;border-radius:3px;background:#FAFBFD"></div>
<div class="t" style="left:25px;top:166.69px;font-size:11px;font-weight:normal;color:#000;">Modify</div>
<div class="t" style="left:25px;top:187.69px;font-size:11px;font-weight:normal;color:#000;">Wall</div>
<div class="t" style="left:25px;top:209.69px;font-size:11px;font-weight:normal;color:#000;">Door</div>
<div class="t" style="left:25px;top:231.69px;font-size:11px;font-weight:normal;color:#000;">Window</div>
<div class="t" style="left:25px;top:253.69px;font-size:11px;font-weight:normal;color:#000;">Component</div>
<div class="t" style="left:25px;top:275.69px;font-size:11px;font-weight:normal;color:#000;">Room</div>
<div class="t" style="left:25px;top:297.69px;font-size:11px;font-weight:normal;color:#000;">Roof &raquo;</div>
<div class="t" style="left:25px;top:319.69px;font-size:11px;font-weight:normal;color:#000;">Floor</div>
<div class="t" style="left:25px;top:341.69px;font-size:11px;font-weight:normal;color:#000;">Grid</div>
<div class="t" style="left:25px;top:363.69px;font-size:11px;font-weight:normal;color:#000;">Lines</div>
<div class="t" style="left:25px;top:385.69px;font-size:11px;font-weight:normal;color:#000;">Ref Plane</div>
<div class="t" style="left:25px;top:407.69px;font-size:11px;font-weight:normal;color:#000;">Dimension</div>
<div class="t" style="left:25px;top:429.69px;font-size:11px;font-weight:normal;color:#000;">Section</div>
<div class="t" style="left:25px;top:451.69px;font-size:11px;font-weight:normal;color:#A8A594;">Level</div>
<div class="t" style="left:25px;top:473.69px;font-size:11px;font-weight:normal;color:#000;">Text</div>
<svg style="position:absolute;left:10px;top:164px;" width="12" height="17" viewBox="0 0 12 17" shape-rendering="crispEdges"><path d="M1.5 1.5 V13 L4.5 10.5 L7 15.5 L9 14.5 L6.8 9.5 H10.5 Z" fill="#fff" stroke="#10107A" stroke-width="1.1" shape-rendering="geometricPrecision"/></svg>
<svg style="position:absolute;left:6px;top:184px;" width="15" height="17" viewBox="0 0 15 17" shape-rendering="crispEdges"><g shape-rendering="geometricPrecision"><path d="M1.5 1.5 L6.5 5 V15.5 L1.5 12 Z" fill="#6A0A0A" stroke="#000" stroke-width="1"/><path d="M6.5 5 L13.5 1.5 V12 L6.5 15.5 Z" fill="#D82828" stroke="#000" stroke-width="1"/><path d="M6.5 7 L13.5 3.5 M6.5 9 L13.5 5.5 M6.5 11 L13.5 7.5 M6.5 13 L13.5 9.5" stroke="#FFD0D0" stroke-width="0.8"/><path d="M8.5 5 V14 M10.5 4 V13 M12 3 V12" stroke="#FFD0D0" stroke-width="0.6" stroke-dasharray="1 1"/><path d="M1.5 1.5 L4 0.5 L6.5 3 L9 2 L13.5 1.5" fill="none" stroke="#000" stroke-width="0.8"/></g></svg>
<svg style="position:absolute;left:6px;top:206px;" width="13" height="17" viewBox="0 0 13 17" shape-rendering="crispEdges"><g shape-rendering="geometricPrecision"><path d="M5.5 1.5 H11.5 V14.5 H6" fill="#A8A8A0" stroke="#000" stroke-width="1.1"/><path d="M1.5 2 L6.5 4.5 V16 L1.5 13 Z" fill="#F8F870" stroke="#000" stroke-width="1.1"/><circle cx="4" cy="9" r="0.9" fill="#000"/></g></svg>
<svg style="position:absolute;left:7px;top:228px;" width="12" height="17" viewBox="0 0 12 17" shape-rendering="crispEdges"><g shape-rendering="geometricPrecision"><path d="M2.5 3.5 L10.5 1 V13.5 L1.5 16 Z" fill="#fff" stroke="#000" stroke-width="1.3"/><path d="M6.3 2.3 V14.8 M2 9.5 L10.5 7" stroke="#000" stroke-width="1.3"/></g></svg>
<svg style="position:absolute;left:5px;top:250px;" width="13" height="17" viewBox="0 0 13 17" shape-rendering="crispEdges"><g shape-rendering="geometricPrecision"><path d="M2.5 8 V2.5 L4.5 1 L6.5 2 V8 Z" fill="#E8E4F8" stroke="#10107A" stroke-width="1"/><path d="M1.5 8 L8 7.5 L11.5 9 L5 10 Z" fill="#D8D4F0" stroke="#10107A" stroke-width="1"/><path d="M1.5 8 V14 M5.5 10 V16 M11.5 9 V14.5" stroke="#000" stroke-width="1.3"/></g></svg>
<svg style="position:absolute;left:6px;top:273px;" width="16" height="16" viewBox="0 0 16 16" shape-rendering="crispEdges"><g shape-rendering="geometricPrecision"><rect x="0.75" y="1.25" width="14" height="13.5" fill="#fff" stroke="#000" stroke-width="1.4"/><path d="M5.5 1.5 V11.7 H1.5 M5.5 5.7 H14" stroke="#000" stroke-width="1.5" fill="none"/><circle cx="10" cy="10.5" r="4.2" fill="#50C8F8"/><path d="M7 7.5 L13 13.5 M13 7.5 L7 13.5" stroke="#10307A" stroke-width="1.2"/></g></svg>
<svg style="position:absolute;left:5px;top:295px;" width="16" height="16" viewBox="0 0 16 16" shape-rendering="crispEdges"><path d="M1 7 L8 1 L15 6 L8 11 Z" fill="#F8F0A0" stroke="#000"/><path d="M1 7 V12 L8 15 V11 M15 6 V10 L8 15" fill="#fff" stroke="#000"/></svg>
<svg style="position:absolute;left:6px;top:317px;" width="15" height="15" viewBox="0 0 15 15" shape-rendering="crispEdges"><rect x="0" y="0" width="15" height="15" fill="#0A0A60"/><g fill="#fff"><rect x="1" y="1" width="2" height="2"/><rect x="5" y="1" width="2" height="2"/><rect x="9" y="1" width="2" height="2"/><rect x="13" y="1" width="1" height="2"/><rect x="3" y="3" width="2" height="2"/><rect x="7" y="3" width="2" height="2"/><rect x="11" y="3" width="2" height="2"/><rect x="1" y="5" width="2" height="2"/><rect x="5" y="5" width="2" height="2"/><rect x="9" y="5" width="2" height="2"/><rect x="13" y="5" width="1" height="2"/><rect x="3" y="7" width="2" height="2"/><rect x="7" y="7" width="2" height="2"/><rect x="11" y="7" width="2" height="2"/><rect x="1" y="9" width="2" height="2"/><rect x="5" y="9" width="2" height="2"/><rect x="9" y="9" width="2" height="2"/><rect x="13" y="9" width="1" height="2"/><rect x="3" y="11" width="2" height="2"/><rect x="7" y="11" width="2" height="2"/><rect x="11" y="11" width="2" height="2"/><rect x="1" y="13" width="2" height="1"/><rect x="5" y="13" width="2" height="1"/><rect x="9" y="13" width="2" height="1"/></g></svg>
<svg style="position:absolute;left:4px;top:339px;" width="17" height="16" viewBox="0 0 17 16" shape-rendering="crispEdges"><g shape-rendering="geometricPrecision" fill="none" stroke="#000"><circle cx="4.5" cy="4.5" r="3.3" fill="#fff" stroke-width="1.3"/><circle cx="13" cy="4.5" r="3.3" fill="#fff" stroke-width="1.3"/><ellipse cx="4.5" cy="4.5" rx="1" ry="1.6" stroke-width="0.9"/><ellipse cx="13" cy="4.5" rx="1" ry="1.6" stroke-width="0.9"/><path d="M4.5 8 V9.5 L6.5 11.5 V15" stroke-width="1.3"/><path d="M13 8 V15" stroke-width="1.3"/></g></svg>
<svg style="position:absolute;left:4px;top:360px;" width="17" height="17" viewBox="0 0 17 17" shape-rendering="crispEdges"><g shape-rendering="geometricPrecision"><path d="M2.5 1.5 V15.5" stroke="#10107A" stroke-width="1.3"/><path d="M0.5 3.5 L2.5 1 L4.5 3.5 Z M0.5 13.5 L2.5 16 L4.5 13.5 Z" fill="#10107A" stroke="#10107A" stroke-width="0.8"/><path d="M7 2.5 Q7 9 11 12 Q13 14 16 14" stroke="#000" stroke-width="1.3" fill="none"/><path d="M6 3 L7 1 L8 3" stroke="#000" fill="none"/><path d="M15.5 12.5 V15.5" stroke="#000" stroke-width="1.3"/></g></svg>
<svg style="position:absolute;left:4px;top:384px;" width="17" height="14" viewBox="0 0 17 14" shape-rendering="crispEdges"><g shape-rendering="geometricPrecision"><path d="M6.5 2 H15.5 L11 11.5 H1.5 Z" fill="#D8F8D0" stroke="#104010" stroke-width="1.1"/><circle cx="6.5" cy="2" r="1" fill="#104010"/><circle cx="15.5" cy="2" r="1" fill="#104010"/><circle cx="1.5" cy="11.5" r="1" fill="#104010"/><circle cx="11" cy="11.5" r="1" fill="#104010"/></g></svg>
<svg style="position:absolute;left:5px;top:406px;" width="16" height="15" viewBox="0 0 16 15" shape-rendering="crispEdges"><g shape-rendering="geometricPrecision"><path d="M2 4 H14" stroke="#000" stroke-width="1.1"/><path d="M1 2 L3 4 M2.5 1.5 L1.5 4.5 M15 2 L13 4 M13.5 1.5 L14.5 4.5" stroke="#000" stroke-width="0.9"/><path d="M2 5 V9 M14 5 V9" stroke="#000" stroke-width="1" stroke-dasharray="1 1"/></g><rect x="2.5" y="10.5" width="11" height="3" fill="#fff" stroke="#10107A" stroke-width="1.2"/></svg>
<svg style="position:absolute;left:4px;top:428px;" width="17" height="14" viewBox="0 0 17 14" shape-rendering="crispEdges"><g shape-rendering="geometricPrecision"><path d="M1.5 2 V6.5 H5" stroke="#000" stroke-width="1.4" fill="none"/><path d="M4.5 6.5 L10 1 L15.5 6.5 L10 12.5 Z" fill="#fff" stroke="#000" stroke-width="1.4"/><path d="M4.5 6.5 H15.5" stroke="#000" stroke-width="1.2"/><path d="M6.5 6 L10 2.5 L13.5 6 Z" fill="#000"/><circle cx="10" cy="9" r="0.9" fill="#000"/><circle cx="10" cy="4.6" r="0.9" fill="#fff"/></g></svg>
<svg style="position:absolute;left:4px;top:448px;" width="18" height="17" viewBox="0 0 18 17" shape-rendering="crispEdges"><g shape-rendering="geometricPrecision"><circle cx="9.5" cy="8.5" r="5" fill="none" stroke="#A8A698" stroke-width="1.2"/><path d="M1 8.5 H17 M9.5 0.5 V16.5" stroke="#A8A698" stroke-width="1"/><path d="M9.5 8.5 V3.5 A5 5 0 0 1 14.5 8.5 Z M9.5 8.5 V13.5 A5 5 0 0 1 4.5 8.5 Z" fill="#A8A698"/></g></svg>
<svg style="position:absolute;left:7px;top:471px;" width="14" height="15" viewBox="0 0 14 15" shape-rendering="crispEdges"><path d="M1 1 H13 V4 H12 L11 2 H8 V13 L10 14 V15 H4 V14 L6 13 V2 H3 L2 4 H1 Z" fill="#000080"/></svg>
<div style="position:absolute;left:2px;top:676px;width:96px;height:18px;box-sizing:border-box;border-top:1px solid #fff;border-left:1px solid #fff;border-right:1px solid #000;border-bottom:1px solid #000;background:#ECE9D8"></div>
<div style="position:absolute;left:2px;top:694px;width:96px;height:18px;box-sizing:border-box;border-top:1px solid #fff;border-left:1px solid #fff;border-right:1px solid #000;border-bottom:1px solid #000;background:#ECE9D8"></div>
<div style="position:absolute;left:2px;top:712px;width:96px;height:18px;box-sizing:border-box;border-top:1px solid #fff;border-left:1px solid #fff;border-right:1px solid #000;border-bottom:1px solid #000;background:#ECE9D8"></div>
<div style="position:absolute;left:2px;top:730px;width:96px;height:18px;box-sizing:border-box;border-top:1px solid #fff;border-left:1px solid #fff;border-right:1px solid #000;border-bottom:1px solid #000;background:#ECE9D8"></div>
<div class="t" style="left:37px;top:679.69px;font-size:11px;font-weight:normal;color:#000;">View</div>
<div class="t" style="left:25px;top:697.69px;font-size:11px;font-weight:normal;color:#000;">Modelling</div>
<div class="t" style="left:29px;top:715.69px;font-size:11px;font-weight:normal;color:#000;">Drafting</div>
<div class="t" style="left:11px;top:733.69px;font-size:11px;font-weight:normal;color:#000;">Room and Area</div>
<div style="position:absolute;left:99px;top:142px;width:2px;height:606px;background:#FBFAF6"></div>
<div style="position:absolute;left:105px;top:142px;width:151px;height:606px;background:#7890E4"></div>
<div style="position:absolute;left:105px;top:142px;width:1px;height:606px;background:#10104A"></div>
<div style="position:absolute;left:106px;top:142px;width:150px;height:1px;background:#8FA0E8"></div>
<div class="t" style="left:109px;top:146.69px;font-size:11px;font-weight:bold;color:#E2EEFC;letter-spacing:0.72px">Project1 - Project br...</div>
<div style="position:absolute;left:238px;top:145px;width:13px;height:13px;box-sizing:border-box;border:1px solid #E8E8F0;background:#B06080"></div>
<svg style="position:absolute;left:238px;top:145px;" width="13" height="13" viewBox="0 0 13 13" shape-rendering="crispEdges"><path d="M3 3 L10 10 M10 3 L3 10" stroke="#fff" stroke-width="2"/></svg>
<div style="position:absolute;left:110px;top:161px;width:143px;height:586px;background:#fff;box-sizing:border-box;border-top:1px solid #5A6496;border-left:1px solid #8890A8"></div>
<svg style="position:absolute;left:0;top:0" width="260" height="768"><path d="M124 171.5 H131" stroke="#A0A0A0" stroke-dasharray="1 1"/><path d="M119.5 176 V460" stroke="#A0A0A0" stroke-dasharray="1 1"/><path d="M139.5 178 V300" stroke="#A0A0A0" stroke-dasharray="1 1"/><path d="M144 187.5 H154" stroke="#A0A0A0" stroke-dasharray="1 1"/><path d="M159.5 192 V236" stroke="#A0A0A0" stroke-dasharray="1 1"/><path d="M160 203.5 H175" stroke="#A0A0A0" stroke-dasharray="1 1"/><path d="M160 219.5 H175" stroke="#A0A0A0" stroke-dasharray="1 1"/><path d="M160 235.5 H175" stroke="#A0A0A0" stroke-dasharray="1 1"/><path d="M144 251.5 H154" stroke="#A0A0A0" stroke-dasharray="1 1"/><path d="M159.5 256 V284" stroke="#A0A0A0" stroke-dasharray="1 1"/><path d="M160 267.5 H175" stroke="#A0A0A0" stroke-dasharray="1 1"/><path d="M160 283.5 H175" stroke="#A0A0A0" stroke-dasharray="1 1"/><path d="M144 299.5 H154" stroke="#A0A0A0" stroke-dasharray="1 1"/><path d="M159.5 304 V364" stroke="#A0A0A0" stroke-dasharray="1 1"/><path d="M160 315.5 H175" stroke="#A0A0A0" stroke-dasharray="1 1"/><path d="M160 331.5 H175" stroke="#A0A0A0" stroke-dasharray="1 1"/><path d="M160 347.5 H175" stroke="#A0A0A0" stroke-dasharray="1 1"/><path d="M160 363.5 H175" stroke="#A0A0A0" stroke-dasharray="1 1"/><path d="M120 379.5 H131" stroke="#A0A0A0" stroke-dasharray="1 1"/><path d="M120 395.5 H131" stroke="#A0A0A0" stroke-dasharray="1 1"/><path d="M120 411.5 H131" stroke="#A0A0A0" stroke-dasharray="1 1"/><path d="M120 459.5 H131" stroke="#A0A0A0" stroke-dasharray="1 1"/><path d="M124 427.5 H131" stroke="#A0A0A0" stroke-dasharray="1 1"/><path d="M124 443.5 H131" stroke="#A0A0A0" stroke-dasharray="1 1"/></svg>
<div style="position:absolute;left:150px;top:164px;width:53px;height:15px;background:#F2F0E6"></div>
<svg style="position:absolute;left:115px;top:167px;" width="9" height="9" viewBox="0 0 9 9" shape-rendering="crispEdges"><defs><linearGradient id="bg" x1="0" y1="0" x2="0" y2="1"><stop offset="0" stop-color="#fff"/><stop offset="1" stop-color="#C8C8C0"/></linearGradient></defs><rect x="0.5" y="0.5" width="8" height="8" fill="url(#bg)" stroke="#8A9AAA"/><path d="M2 4.5 H7" stroke="#000"/></svg>
<svg style="position:absolute;left:135px;top:183px;" width="9" height="9" viewBox="0 0 9 9" shape-rendering="crispEdges"><defs><linearGradient id="bg" x1="0" y1="0" x2="0" y2="1"><stop offset="0" stop-color="#fff"/><stop offset="1" stop-color="#C8C8C0"/></linearGradient></defs><rect x="0.5" y="0.5" width="8" height="8" fill="url(#bg)" stroke="#8A9AAA"/><path d="M2 4.5 H7" stroke="#000"/></svg>
<svg style="position:absolute;left:135px;top:247px;" width="9" height="9" viewBox="0 0 9 9" shape-rendering="crispEdges"><defs><linearGradient id="bg" x1="0" y1="0" x2="0" y2="1"><stop offset="0" stop-color="#fff"/><stop offset="1" stop-color="#C8C8C0"/></linearGradient></defs><rect x="0.5" y="0.5" width="8" height="8" fill="url(#bg)" stroke="#8A9AAA"/><path d="M2 4.5 H7" stroke="#000"/></svg>
<svg style="position:absolute;left:135px;top:295px;" width="9" height="9" viewBox="0 0 9 9" shape-rendering="crispEdges"><defs><linearGradient id="bg" x1="0" y1="0" x2="0" y2="1"><stop offset="0" stop-color="#fff"/><stop offset="1" stop-color="#C8C8C0"/></linearGradient></defs><rect x="0.5" y="0.5" width="8" height="8" fill="url(#bg)" stroke="#8A9AAA"/><path d="M2 4.5 H7" stroke="#000"/></svg>
<svg style="position:absolute;left:115px;top:423px;" width="9" height="9" viewBox="0 0 9 9" shape-rendering="crispEdges"><defs><linearGradient id="bg" x1="0" y1="0" x2="0" y2="1"><stop offset="0" stop-color="#fff"/><stop offset="1" stop-color="#C8C8C0"/></linearGradient></defs><rect x="0.5" y="0.5" width="8" height="8" fill="url(#bg)" stroke="#8A9AAA"/><path d="M2 4.5 H7" stroke="#000"/><path d="M4.5 2 V7" stroke="#000"/></svg>
<svg style="position:absolute;left:115px;top:439px;" width="9" height="9" viewBox="0 0 9 9" shape-rendering="crispEdges"><defs><linearGradient id="bg" x1="0" y1="0" x2="0" y2="1"><stop offset="0" stop-color="#fff"/><stop offset="1" stop-color="#C8C8C0"/></linearGradient></defs><rect x="0.5" y="0.5" width="8" height="8" fill="url(#bg)" stroke="#8A9AAA"/><path d="M2 4.5 H7" stroke="#000"/><path d="M4.5 2 V7" stroke="#000"/></svg>
<svg style="position:absolute;left:131px;top:165px;" width="17" height="12" viewBox="0 0 17 12" shape-rendering="crispEdges"><g shape-rendering="geometricPrecision"><path d="M1 6 Q8.5 -1 16 6 Q8.5 13 1 6 Z" fill="#fff" stroke="#000" stroke-width="1.6"/><circle cx="8.5" cy="6" r="3.3" fill="#000"/><circle cx="8" cy="5" r="1.1" fill="#999"/></g></svg>
<div style="position:absolute;left:111px;top:162px;width:138px;height:566px;overflow:hidden">
<div class="t" style="left:42px;top:3.69px;font-weight:normal;">Views (all)</div>
<div class="t" style="left:46px;top:19.69px;font-weight:normal;">Floor Plans</div>
<div class="t" style="left:66px;top:35.69px;font-weight:bold;transform:scaleX(1.11);">Level 1</div>
<div class="t" style="left:66px;top:51.69px;font-weight:normal;">Level 2</div>
<div class="t" style="left:66px;top:67.69px;font-weight:normal;">Site</div>
<div class="t" style="left:46px;top:83.69px;font-weight:normal;">Ceiling Plans</div>
<div class="t" style="left:66px;top:99.69px;font-weight:normal;">Level 1</div>
<div class="t" style="left:66px;top:115.69px;font-weight:normal;">Level 2</div>
<div class="t" style="left:46px;top:131.69px;font-weight:normal;">Elevations (Building Elevation)</div>
<div class="t" style="left:66px;top:147.69px;font-weight:normal;">East</div>
<div class="t" style="left:66px;top:163.69px;font-weight:normal;">North</div>
<div class="t" style="left:66px;top:179.69px;font-weight:normal;">South</div>
<div class="t" style="left:66px;top:195.69px;font-weight:normal;">West</div>
<div class="t" style="left:42px;top:211.69px;font-weight:normal;">Legends</div>
<div class="t" style="left:42px;top:227.69px;font-weight:normal;">Schedules/Quantities</div>
<div class="t" style="left:42px;top:243.69px;font-weight:normal;">Sheets (all)</div>
<div class="t" style="left:42px;top:259.69px;font-weight:normal;">Families</div>
<div class="t" style="left:42px;top:275.69px;font-weight:normal;">Groups</div>
<div class="t" style="left:42px;top:291.69px;font-weight:normal;">Revit Links</div>
</div>
<svg style="position:absolute;left:131px;top:372px;" width="16" height="14" viewBox="0 0 16 14" shape-rendering="crispEdges"><rect x="0.5" y="0.5" width="15" height="13" fill="#fff" stroke="#000"/><rect x="2.5" y="2.5" width="3" height="2" fill="none" stroke="#000"/><path d="M7 3.5 H13 M7 6.5 H13 M7 9.5 H13 M3 7 L5 8.5 L3 10 Z" stroke="#000" fill="none"/></svg>
<svg style="position:absolute;left:131px;top:388px;" width="16" height="14" viewBox="0 0 16 14" shape-rendering="crispEdges"><rect x="0.5" y="0.5" width="15" height="13" fill="#fff" stroke="#000"/><path d="M0.5 3.5 H15.5 M0.5 6.5 H15.5 M0.5 9.5 H15.5 M5.5 0.5 V13.5" stroke="#000"/></svg>
<svg style="position:absolute;left:131px;top:404px;" width="16" height="14" viewBox="0 0 16 14" shape-rendering="crispEdges"><rect x="0.5" y="0.5" width="15" height="13" fill="#fff" stroke="#000"/><path d="M11.5 0.5 V13.5 M12 3 H15 M12 6 H15 M12 9 H15" stroke="#000"/></svg>
<svg style="position:absolute;left:133px;top:420px;" width="15" height="14" viewBox="0 0 15 14" shape-rendering="crispEdges"><rect x="0.5" y="3.5" width="3" height="10" rx="1" fill="#fff" stroke="#000"/><path d="M5.5 4 L14.5 1 V10 L5.5 13 Z M10 2.5 V11.5 M5.5 8.5 L14.5 5.5" fill="#fff" stroke="#000"/></svg>
<svg style="position:absolute;left:131px;top:436px;" width="16" height="15" viewBox="0 0 16 15" shape-rendering="crispEdges"><rect x="0.5" y="0.5" width="15" height="14" fill="none" stroke="#000" stroke-dasharray="2 1"/><rect x="3.5" y="3.5" width="4" height="8" fill="none" stroke="#000"/><rect x="9.5" y="3.5" width="3" height="4" fill="none" stroke="#000"/><rect x="9.5" y="9.5" width="3" height="3" fill="none" stroke="#000"/></svg>
<svg style="position:absolute;left:131px;top:454px;" width="16" height="11" viewBox="0 0 16 11" shape-rendering="crispEdges"><rect x="0.5" y="0.5" width="15" height="10" fill="#fff" stroke="#000"/></svg>
<div style="position:absolute;left:111px;top:729px;width:141px;height:17px;background:linear-gradient(to bottom,#F3F1EC,#FEFEFB)"></div>
<div style="position:absolute;left:112px;top:730px;width:16px;height:15px;box-sizing:border-box;border:1px solid #fff;border-right-color:#A4B6E2;border-bottom-color:#98ACDC;border-radius:2px;background:linear-gradient(135deg,#E0E8FE 0%,#C8D8FA 60%,#B6CAF4 100%)"></div>
<svg style="position:absolute;left:112px;top:730px;" width="16" height="15" viewBox="0 0 16 15" shape-rendering="crispEdges"><path d="M9 3 L5 7.5 L9 12" stroke="#4D6185" stroke-width="2.2" fill="none" shape-rendering="geometricPrecision"/></svg>
<div style="position:absolute;left:236px;top:730px;width:16px;height:15px;box-sizing:border-box;border:1px solid #fff;border-right-color:#A4B6E2;border-bottom-color:#98ACDC;border-radius:2px;background:linear-gradient(135deg,#E0E8FE 0%,#C8D8FA 60%,#B6CAF4 100%)"></div>
<svg style="position:absolute;left:236px;top:730px;" width="16" height="15" viewBox="0 0 16 15" shape-rendering="crispEdges"><path d="M6 3 L10 7.5 L6 12" stroke="#4D6185" stroke-width="2.2" fill="none" shape-rendering="geometricPrecision"/></svg>
<div style="position:absolute;left:129px;top:730px;width:76px;height:15px;box-sizing:border-box;border:1px solid #fff;border-right-color:#A4B6E2;border-bottom-color:#98ACDC;border-radius:2px;background:linear-gradient(to bottom,#CAD8FA,#B8CCF6)"></div>
<svg style="position:absolute;left:163px;top:734px;" width="10" height="8" viewBox="0 0 10 8" shape-rendering="crispEdges"><path d="M1.5 0 V8 M3.5 0 V8 M5.5 0 V8 M7.5 0 V8" stroke="#EEF4FE"/><path d="M2.5 1 V8 M4.5 1 V8 M6.5 1 V8 M8.5 1 V8" stroke="#8CA8E0"/></svg>
<div style="position:absolute;left:253px;top:142px;width:3px;height:606px;background:linear-gradient(to right,#7585D8,#5565BC)"></div>
<div style="position:absolute;left:252px;top:161px;width:1px;height:586px;background:#E8ECF8"></div>
<div style="position:absolute;left:105px;top:746px;width:151px;height:2px;background:#7890E4"></div>
<div style="position:absolute;left:256px;top:142px;width:6px;height:606px;background:#ECE9D8"></div>
<div style="position:absolute;left:256px;top:142px;width:2px;height:606px;background:#F8F7EE"></div>
<div style="position:absolute;left:262px;top:141px;width:761px;height:608px;background:#fff"></div>
<div style="position:absolute;left:262px;top:141px;width:761px;height:1px;background:#716F64"></div>
<div style="position:absolute;left:262px;top:141px;width:1px;height:608px;background:#716F64"></div>
<div style="position:absolute;left:263px;top:142px;width:759px;height:1px;background:#ACA899"></div>
<div style="position:absolute;left:263px;top:142px;width:1px;height:606px;background:#ACA899"></div>
<div style="position:absolute;left:1021px;top:141px;width:1px;height:608px;background:#E6E5DE"></div>
<div style="position:absolute;left:1022px;top:141px;width:2px;height:608px;background:#FAFAF5"></div>
<div style="position:absolute;left:1005px;top:142px;width:16px;height:587px;background:linear-gradient(to right,#F1F1EB,#FBFBF6)"></div>
<div style="position:absolute;left:1006px;top:143px;width:16px;height:16px;box-sizing:border-box;border:1px solid #fff;border-right-color:#A4B6E2;border-bottom-color:#98ACDC;border-radius:2px;background:linear-gradient(135deg,#E0E8FE 0%,#C8D8FA 60%,#B6CAF4 100%)"></div>
<svg style="position:absolute;left:1006px;top:143px;" width="16" height="16" viewBox="0 0 16 16" shape-rendering="crispEdges"><path d="M3 9 L7.5 5 L12 9" stroke="#4D6185" stroke-width="2.2" fill="none" shape-rendering="geometricPrecision"/></svg>
<div style="position:absolute;left:1006px;top:713px;width:16px;height:16px;box-sizing:border-box;border:1px solid #fff;border-right-color:#A4B6E2;border-bottom-color:#98ACDC;border-radius:2px;background:linear-gradient(135deg,#E0E8FE 0%,#C8D8FA 60%,#B6CAF4 100%)"></div>
<svg style="position:absolute;left:1006px;top:713px;" width="16" height="16" viewBox="0 0 16 16" shape-rendering="crispEdges"><path d="M3 6 L7.5 10 L12 6" stroke="#4D6185" stroke-width="2.2" fill="none" shape-rendering="geometricPrecision"/></svg>
<div style="position:absolute;left:1006px;top:427px;width:16px;height:16px;box-sizing:border-box;border:1px solid #fff;border-right-color:#A4B6E2;border-bottom-color:#98ACDC;border-radius:2px;background:linear-gradient(to right,#CAD8FA,#B8CCF6)"></div>
<svg style="position:absolute;left:1010px;top:431px;" width="8" height="8" viewBox="0 0 8 8" shape-rendering="crispEdges"><path d="M0 1.5 H8 M0 3.5 H8 M0 5.5 H8 M0 7.5 H8" stroke="#EEF4FE"/><path d="M1 2.5 H8 M1 4.5 H8 M1 6.5 H8" stroke="#8CA8E0"/></svg>
<div style="position:absolute;left:264px;top:729px;width:758px;height:19px;background:linear-gradient(to bottom,#F3F1EC,#FEFEFB)"></div>
<div style="position:absolute;left:264px;top:729px;width:225px;height:19px;background:linear-gradient(to bottom,#F4F3EC,#EAE8DE)"></div>
<div style="position:absolute;left:264px;top:746px;width:758px;height:2px;background:#ECE9D8"></div>
<div class="t" style="left:275px;top:732.69px;font-size:11px;font-weight:normal;color:#000;">1/8" = 1'-0"</div>
<svg style="position:absolute;left:346px;top:731px;" width="12" height="12" viewBox="0 0 12 12" shape-rendering="crispEdges"><rect x="0.5" y="0.5" width="10" height="10" fill="#fff" stroke="#000"/><rect x="5.5" y="1" width="5" height="4.5" fill="#333"/><rect x="1" y="5.5" width="4.5" height="5" fill="#888"/></svg>
<svg style="position:absolute;left:365px;top:731px;" width="15" height="12" viewBox="0 0 15 12" shape-rendering="crispEdges"><path d="M2 5 Q1 1 5 1 Q7 0 9 1 Q14 1 13 5 Q13 8 9 8 H5 Q1 8 2 5 Z" fill="#fff" stroke="#000" stroke-width="1.2"/><path d="M4 4 Q7 6 10 4 M7 5 V11" stroke="#000" fill="none"/></svg>
<svg style="position:absolute;left:389px;top:731px;" width="8" height="12" viewBox="0 0 8 12" shape-rendering="crispEdges"><path d="M4 1.5 L7 1.5 L4 10.5 L1 10.5 Z" fill="#fff" stroke="#000" stroke-width="1.2"/></svg>
<svg style="position:absolute;left:406px;top:730px;" width="14" height="13" viewBox="0 0 14 13" shape-rendering="crispEdges"><path d="M4 0 V10 H14 M0 3 H10 V13" stroke="#0000E0" stroke-width="2.4" fill="none"/><path d="M1 12.5 L13 1" stroke="#B02040" stroke-width="1.3" shape-rendering="geometricPrecision"/></svg>
<svg style="position:absolute;left:427px;top:729px;" width="15" height="14" viewBox="0 0 15 14" shape-rendering="crispEdges"><path d="M4 4 V11 H14 M0 6.5 H10 V14" stroke="#0000E0" stroke-width="2.4" fill="none"/><ellipse cx="11" cy="3.5" rx="2.5" ry="3" fill="#B8B8B8" stroke="#707070" shape-rendering="geometricPrecision"/></svg>
<svg style="position:absolute;left:447px;top:730px;" width="17" height="13" viewBox="0 0 17 13" shape-rendering="crispEdges"><g shape-rendering="geometricPrecision"><path d="M1 5 Q2 2 4 4 M8 2 Q11 0 14 3" stroke="#000" fill="none" stroke-width="1.1"/><path d="M4 7 Q4 12 8 11 Q10 10 9 7 Z" fill="#40E0C0" stroke="#000"/><path d="M10 6 Q10 11 14 10 Q16 9 15 5 Z" fill="#40E0C0" stroke="#000"/></g></svg>
<svg style="position:absolute;left:472px;top:729px;" width="11" height="13" viewBox="0 0 11 13" shape-rendering="crispEdges"><g shape-rendering="geometricPrecision"><circle cx="5.5" cy="4.5" r="4" fill="#F8F040" stroke="#303000"/><path d="M5.5 3 V8" stroke="#606000"/><rect x="3" y="9" width="5" height="1.5" fill="#303030"/><rect x="3.5" y="10.5" width="4" height="1.5" fill="#000"/></g></svg>
<div style="position:absolute;left:489px;top:731px;width:15px;height:14px;box-sizing:border-box;border:1px solid #fff;border-right-color:#A4B6E2;border-bottom-color:#98ACDC;border-radius:2px;background:linear-gradient(135deg,#E0E8FE 0%,#C8D8FA 60%,#B6CAF4 100%)"></div>
<svg style="position:absolute;left:489px;top:731px;" width="15" height="14" viewBox="0 0 15 14" shape-rendering="crispEdges"><path d="M9 3 L5 7.5 L9 12" stroke="#4D6185" stroke-width="2.2" fill="none" shape-rendering="geometricPrecision"/></svg>
<div style="position:absolute;left:989px;top:731px;width:15px;height:14px;box-sizing:border-box;border:1px solid #fff;border-right-color:#A4B6E2;border-bottom-color:#98ACDC;border-radius:2px;background:linear-gradient(135deg,#E0E8FE 0%,#C8D8FA 60%,#B6CAF4 100%)"></div>
<svg style="position:absolute;left:989px;top:731px;" width="15" height="14" viewBox="0 0 15 14" shape-rendering="crispEdges"><path d="M6 3 L10 7.5 L6 12" stroke="#4D6185" stroke-width="2.2" fill="none" shape-rendering="geometricPrecision"/></svg>
<div style="position:absolute;left:739px;top:731px;width:16px;height:14px;box-sizing:border-box;border:1px solid #fff;border-right-color:#A4B6E2;border-bottom-color:#98ACDC;border-radius:2px;background:linear-gradient(to bottom,#CAD8FA,#B8CCF6)"></div>
<svg style="position:absolute;left:743px;top:734px;" width="8" height="8" viewBox="0 0 8 8" shape-rendering="crispEdges"><path d="M1.5 0 V8 M3.5 0 V8 M5.5 0 V8 M7.5 0 V8" stroke="#EEF4FE"/><path d="M2.5 1 V8 M4.5 1 V8 M6.5 1 V8" stroke="#8CA8E0"/></svg>
<svg style="position:absolute;left:1006px;top:731px;" width="16" height="15" viewBox="0 0 16 15" shape-rendering="crispEdges"><g fill="#C4C1B0"><rect x="12" y="3" width="2" height="2"/><rect x="8" y="7" width="2" height="2"/><rect x="12" y="7" width="2" height="2"/><rect x="4" y="11" width="2" height="2"/><rect x="8" y="11" width="2" height="2"/><rect x="12" y="11" width="2" height="2"/></g></svg>
<svg style="position:absolute;left:0;top:0" width="1024" height="768"><g stroke="#000" stroke-width="1" shape-rendering="crispEdges"><line x1="376.5" y1="328" x2="376.5" y2="429"/><line x1="347" y1="358.5" x2="460" y2="358.5"/><line x1="347" y1="365.5" x2="460" y2="365.5"/><line x1="347" y1="399.5" x2="460" y2="399.5"/><line x1="481" y1="358.5" x2="1004" y2="358.5"/><line x1="481" y1="365.5" x2="1004" y2="365.5"/><line x1="481" y1="399.5" x2="1004" y2="399.5"/><line x1="481.5" y1="358" x2="481.5" y2="400"/></g><g stroke="#000" stroke-width="1.1" fill="none"><line x1="357" y1="339" x2="396" y2="379"/><line x1="357" y1="346" x2="396" y2="386"/><line x1="357" y1="380" x2="396" y2="419"/><path d="M333.5 311 Q334 330 341 341 Q350 354 376 364" fill="none"/><path d="M376 382 Q358 383 348 394 Q338 404 334 428" fill="none"/></g></svg>
<div class="t" style="left:0;top:0;transform-origin:0 0;transform:translate(311.0px,220.01px) rotate(-90deg) scaleX(0.939);font-size:45px;-webkit-text-stroke:0.6px #000">&quot;</div>
<div class="t" style="left:0;top:0;transform-origin:0 0;transform:translate(311.0px,245.22px) rotate(-90deg) scaleX(1.035);font-size:45px;-webkit-text-stroke:0.6px #000">2</div>
<div class="t" style="left:0;top:0;transform-origin:0 0;transform:translate(311.0px,269.42px) rotate(-90deg) scaleX(1.128);font-size:45px;-webkit-text-stroke:0.6px #000">-</div>
<div class="t" style="left:0;top:0;transform-origin:0 0;transform:translate(311.0px,287.03px) rotate(-90deg) scaleX(0.949);font-size:45px;-webkit-text-stroke:0.6px #000">&#39;</div>
<div class="t" style="left:0;top:0;transform-origin:0 0;transform:translate(311.0px,311.01px) rotate(-90deg) scaleX(0.936);font-size:45px;-webkit-text-stroke:0.6px #000">0</div>
<div class="t" style="left:0;top:0;transform-origin:0 0;transform:translate(311.0px,442.65px) rotate(-90deg) scaleX(0.768);font-size:45px;-webkit-text-stroke:0.6px #000">&quot;</div>
<div class="t" style="left:0;top:0;transform-origin:0 0;transform:translate(311.0px,467.01px) rotate(-90deg) scaleX(0.936);font-size:45px;-webkit-text-stroke:0.6px #000">0</div>
<div class="t" style="left:0;top:0;transform-origin:0 0;transform:translate(311.0px,489.01px) rotate(-90deg) scaleX(0.625);font-size:45px;-webkit-text-stroke:0.6px #000">1</div>
<div class="t" style="left:0;top:0;transform-origin:0 0;transform:translate(311.0px,516.42px) rotate(-90deg) scaleX(1.128);font-size:45px;-webkit-text-stroke:0.6px #000">-</div>
<div class="t" style="left:0;top:0;transform-origin:0 0;transform:translate(311.0px,535.03px) rotate(-90deg) scaleX(0.949);font-size:45px;-webkit-text-stroke:0.6px #000">&#39;</div>
<div class="t" style="left:0;top:0;transform-origin:0 0;transform:translate(311.0px,557.01px) rotate(-90deg) scaleX(0.936);font-size:45px;-webkit-text-stroke:0.6px #000">0</div>
<div style="position:absolute;left:0px;top:748px;width:1024px;height:1px;background:#D0CDBF"></div>
<div style="position:absolute;left:0px;top:749px;width:1024px;height:1px;background:#F2F0E8"></div>
<div class="t" style="left:2px;top:753.69px;font-size:11px;font-weight:normal;color:#000;">Click to select, TAB for alternates, CTRL adds, SHIFT unselects.</div>
<div style="position:absolute;left:905px;top:751px;width:1px;height:14px;background:#D5D2C4"></div>
<div style="position:absolute;left:906px;top:751px;width:1px;height:14px;background:#fff"></div>
<div style="position:absolute;left:933px;top:751px;width:1px;height:14px;background:#D5D2C4"></div>
<div style="position:absolute;left:934px;top:751px;width:1px;height:14px;background:#fff"></div>
<div style="position:absolute;left:963px;top:751px;width:1px;height:14px;background:#D5D2C4"></div>
<div style="position:absolute;left:964px;top:751px;width:1px;height:14px;background:#fff"></div>
<div style="position:absolute;left:997px;top:751px;width:1px;height:14px;background:#D5D2C4"></div>
<div style="position:absolute;left:998px;top:751px;width:1px;height:14px;background:#fff"></div>
<svg style="position:absolute;left:1003px;top:750px;" width="20" height="16" viewBox="0 0 20 16" shape-rendering="crispEdges"><g shape-rendering="geometricPrecision"><path d="M4 3 Q2 9 7 12 L13 5 Q9 1 4 3 Z" fill="#C8D8F0" stroke="#203080" stroke-width="1.6"/><path d="M9 8 L14 2" stroke="#203080" stroke-width="1.5"/><path d="M2 14 H8" stroke="#404040" stroke-width="1.2"/><path d="M12 5 L18 15.5 H6 Z" fill="#F0F020" stroke="#A09000" stroke-width="0.8"/><rect x="11" y="8" width="2" height="4" fill="#000"/><rect x="11" y="13" width="2" height="1.5" fill="#000"/></g></svg>
<div style="position:absolute;left:0px;top:766px;width:1024px;height:2px;background:linear-gradient(to bottom,#3A80E8,#2460D8)"></div>
</body></html>
